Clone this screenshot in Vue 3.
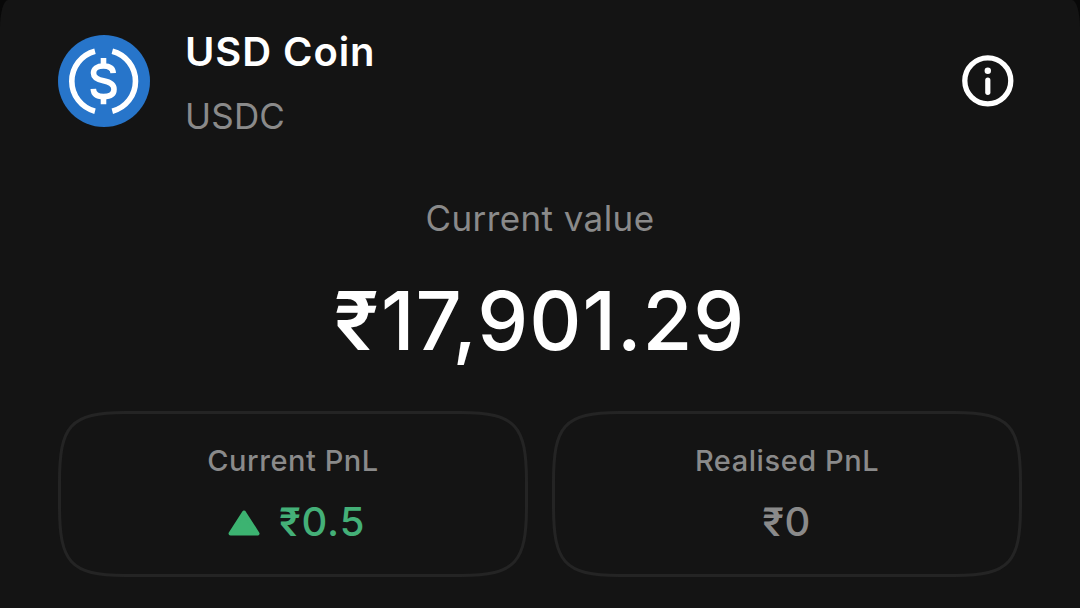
<script setup>
const cards = [
  { label: 'Current PnL', value: '0.5', up: true },
  { label: 'Realised PnL', value: '0', up: false },
]
</script>

<template>
  <main class="sheet">
    <header class="head">
      <svg class="coin" viewBox="0 0 92 92" aria-hidden="true">
        <circle cx="46" cy="46" r="46" fill="#2775ca" />
        <g fill="none" stroke="#fff" stroke-width="5.6">
          <path d="M37 16.200A31 31 0 0 0 37 76.200" />
          <path d="M54.300 16.200A31 31 0 0 1 54.300 76.200" />
          <path d="M55.200 38.200C55 33.500 51.500 31 45.500 31C39 31 35.500 33.800 35.500 38C35.500 43 39.500 44.600 45.500 45.800C52 47 56 49.200 56 54.200C56 59.200 52 61.500 45.500 61.500C39 61.500 35.500 59.200 35.300 53.800" />
          <path d="M45.500 23V32.500M45.500 60.500V69.300" />
        </g>
      </svg>
      <div class="names">
        <h1 class="name">USD Coin</h1>
        <p class="symbol">USDC</p>
      </div>
      <svg class="info" viewBox="0 0 52 52" aria-hidden="true">
        <circle cx="25.800" cy="25.800" r="23" fill="none" stroke="#fff" stroke-width="5.300" />
        <circle cx="25.800" cy="15.800" r="3.200" fill="#fff" />
        <path d="M25.800 25V37.300" stroke="#fff" stroke-width="5.200" stroke-linecap="round" />
      </svg>
    </header>

    <section class="total">
      <p class="caption">Current value</p>
      <p class="amount"><span class="rupee">₹</span>17,901.29</p>
    </section>

    <section class="cards">
      <article v-for="card in cards" :key="card.label" class="card">
        <svg class="outline" viewBox="0 0 470 166" aria-hidden="true">
          <path d="M1.500 71C1.500 15 12 1.500 67 1.500H403C458 1.500 468.500 15 468.500 71V95C468.500 151 458 164.500 403 164.500H67C12 164.500 1.500 151 1.500 95Z" />
        </svg>
        <p class="label">{{ card.label }}</p>
        <p class="value" :class="{ up: card.up }">
          <svg v-if="card.up" class="arrow" viewBox="0 0 32 26" aria-hidden="true">
            <path d="M16 2.500L29.500 23.500H2.500Z" fill="#3cb371" stroke="#3cb371" stroke-width="4" stroke-linejoin="round" />
          </svg>
          <span><span class="rupee">₹</span>{{ card.value }}</span>
        </p>
      </article>
    </section>
  </main>
</template>

<style>
body {
  background: #080808;
}
</style>

<style scoped>
.sheet {
  box-sizing: border-box;
  width: 1080px;
  height: 608px;
  padding: 26px 58px 0;
  overflow: hidden;
  background: #141414;
  border-radius: 8px 8px 0 0 / 28px 28px 0 0;
  color: #fff;
  font-family: Inter, "Liberation Sans", sans-serif;
}

h1,
p {
  margin: 0;
  white-space: nowrap;
}

.head {
  display: flex;
  height: 110px;
  align-items: center;
}

.coin {
  width: 92px;
  height: 92px;
}

.names {
  flex: 1;
  margin-left: 35px;
  padding-top: 3px;
}

.name {
  font-size: 40px;
  font-weight: 600;
  line-height: 52px;
  letter-spacing: 0.9px;
}

.symbol {
  margin-top: 15px;
  color: #8a8a8a;
  font-size: 35px;
  line-height: 46px;
  letter-spacing: 0.2px;
}

.info {
  width: 52px;
  height: 52px;
  margin-right: 8px;
}

.total {
  text-align: center;
}

.caption {
  margin-top: 59px;
  color: #8a8a8a;
  font-size: 35px;
  line-height: 46px;
  letter-spacing: 0.4px;
}

.amount {
  margin-top: 30px;
  font-size: 81px;
  font-weight: 500;
  line-height: 100px;
  letter-spacing: 0.9px;
}

.rupee {
  font-family: Roboto, Inter, sans-serif;
  line-height: 1;
}

.amount .rupee {
  margin-right: 2px;
  font-size: 83px;
}

.cards {
  display: flex;
  gap: 24px;
  margin-top: 40px;
}

.card {
  position: relative;
  box-sizing: border-box;
  width: 470px;
  height: 166px;
  padding-top: 30px;
  text-align: center;
}

.outline {
  position: absolute;
  inset: 0;
  width: 470px;
  height: 166px;
  fill: none;
  stroke: #242424;
  stroke-width: 3px;
}

.label {
  color: #8a8a8a;
  font-size: 29px;
  font-weight: 500;
  line-height: 40px;
  letter-spacing: 0.55px;
}

.value {
  display: flex;
  align-items: center;
  justify-content: center;
  gap: 19px;
  margin-top: 15px;
  color: #8a8a8a;
  font-size: 40px;
  font-weight: 500;
  line-height: 52px;
  letter-spacing: 1px;
}

.up {
  padding-left: 8px;
  color: #44b078;
}

.arrow {
  width: 32px;
  height: 26px;
  margin-top: 2px;
}
</style>
